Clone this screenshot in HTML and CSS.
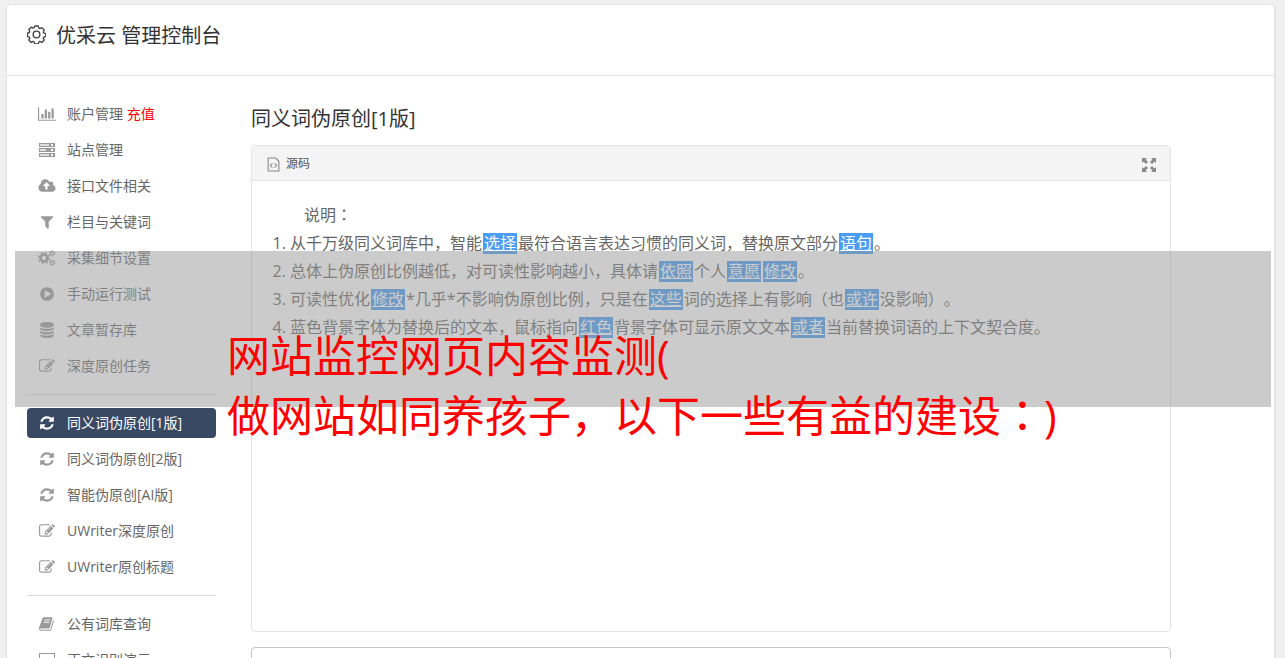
FILE: index.html
```html
<!DOCTYPE html>
<html lang="zh-CN">
<head>
  <meta charset="UTF-8">
  <meta name="viewport" content="width=device-width, initial-scale=1.0">
  <title>优采云 管理控制台</title>
  <link rel="stylesheet" href="styles.css">
</head>
<body>
  <!-- 图标 -->
  <svg class="sprite" aria-hidden="true">
    <symbol id="i-chart" viewBox="0 0 2048 1792"><path d="M640 896v512h-256v-512h256zm384-512v1024h-256v-1024h256zm1024 1152v128h-2048v-1536h128v1408h1920zm-640-896v768h-256v-768h256zm384-384v1152h-256v-1152h256z"/></symbol>
    <symbol id="i-server" viewBox="0 0 16 14"><path fill-rule="evenodd" d="M0 0h16v4H0zM12 1v2h2V1zM0 5h16v4H0zM12 6v2h2V6zM0 10h16v4H0zM12 11v2h2v-2z"/><path fill="#ddd" d="M1 1h9v2H1zM1 6h6v2H1zM1 11h9v2H1z"/></symbol>
    <symbol id="i-cloud" viewBox="-64 0 1920 1792"><path d="M1216 864q0-14-9-23l-352-352q-9-9-23-9t-23 9l-351 351q-10 12-10 24 0 14 9 23t23 9h224v352q0 13 9.5 22.5t22.5 9.5h192q13 0 22.5-9.5t9.5-22.5v-352h224q13 0 22.5-9.5t9.5-22.5zm640 288q0 159-112.5 271.5t-271.5 112.5h-1088q-185 0-316.5-131.5t-131.5-316.5q0-130 70-240t188-165q-2-30-2-43 0-212 150-362t362-150q156 0 285.5 87t188.5 231q71-62 166-62 106 0 181 75t75 181q0 76-41 138 130 31 213.5 135.5t83.5 238.5z"/></symbol>
    <symbol id="i-filter" viewBox="0 0 1792 1792"><path d="M1595 295q17 41-14 70l-493 493v742q0 42-39 59-13 5-25 5-27 0-45-19l-256-256q-19-19-19-45v-486l-493-493q-31-29-14-70 17-39 59-39h1280q42 0 59 39z"/></symbol>
    <symbol id="i-cogs" viewBox="0 0 18 16">
      <g fill="none" stroke="currentColor">
        <circle cx="6" cy="8" r="3.4" stroke-width="2.4"/>
        <circle cx="6" cy="8" r="5.2" stroke-width="1.6" stroke-dasharray="2 2.084"/>
        <circle cx="14.2" cy="3.4" r="1.8" stroke-width="1.2"/>
        <circle cx="14.2" cy="3.4" r="2.8" stroke-width="1" stroke-dasharray="1.2 1.732"/>
        <circle cx="14.2" cy="12.6" r="1.8" stroke-width="1.2"/>
        <circle cx="14.2" cy="12.6" r="2.8" stroke-width="1" stroke-dasharray="1.2 1.732"/>
      </g>
    </symbol>
    <symbol id="i-play" viewBox="0 0 1792 1792"><path d="M896 128q209 0 385.5 103t279.5 279.5 103 385.5-103 385.5-279.5 279.5-385.5 103-385.5-103-279.5-279.5-103-385.5 103-385.5 279.5-279.5 385.5-103zm384 823q32-18 32-55t-32-55l-544-320q-31-19-64-1-32 19-32 56v640q0 37 32 56 16 8 32 8 17 0 32-9z"/></symbol>
    <symbol id="i-database" viewBox="0 0 1792 1792"><path d="M896 768q237 0 443-43t325-127v170q0 69-103 128t-280 93.5-385 34.5-385-34.5-280-93.5-103-128v-170q119 84 325 127t443 43zm0 768q237 0 443-43t325-127v170q0 69-103 128t-280 93.5-385 34.5-385-34.5-280-93.5-103-128v-170q119 84 325 127t443 43zm0-384q237 0 443-43t325-127v170q0 69-103 128t-280 93.5-385 34.5-385-34.5-280-93.5-103-128v-170q119 84 325 127t443 43zm0-1152q208 0 385 34.5t280 93.5 103 128v128q0 69-103 128t-280 93.5-385 34.5-385-34.5-280-93.5-103-128v-128q0-69 103-128t280-93.5 385-34.5z"/></symbol>
    <symbol id="i-edit" viewBox="0 0 1792 1792"><path d="M888 1184l116-116-152-152-116 116v56h96v96h56zm440-720q-16-16-33 1l-350 350q-17 17-1 33t33-1l350-350q17-17 1-33zm80 594v190q0 119-84.5 203.5t-203.5 84.5h-832q-119 0-203.5-84.5t-84.5-203.5v-832q0-119 84.5-203.5t203.5-84.5h832q63 0 117 25 15 7 18 23 3 17-9 29l-49 49q-14 14-32 8-23-6-45-6h-832q-66 0-113 47t-47 113v832q0 66 47 113t113 47h832q66 0 113-47t47-113v-126q0-13 9-22l64-64q15-15 35-7t20 29zm-96-738l288 288-672 672h-288v-288zm444 132l-92 92-288-288 92-92q28-28 68-28t68 28l152 152q28 28 28 68t-28 68z"/></symbol>
    <symbol id="i-refresh" viewBox="0 0 1792 1792"><path d="M1639 1056q0 5-1 7-64 268-268 434.5t-478 166.5q-146 0-282.5-55t-243.5-157l-129 129q-19 19-45 19t-45-19-19-45v-448q0-26 19-45t45-19h448q26 0 45 19t19 45-19 45l-137 137q71 66 161 102t187 36q134 0 250-65t186-179q11-17 53-117 8-23 30-23h192q13 0 22.5 9.5t9.5 22.5zm25-800v448q0 26-19 45t-45 19h-448q-26 0-45-19t-19-45 19-45l138-138q-148-137-349-137-134 0-250 65t-186 179q-11 17-53 117-8 23-30 23h-199q-13 0-22.5-9.5t-9.5-22.5v-7q65-268 270-434.5t480-166.5q146 0 284 55.5t245 156.5l130-129q19-19 45-19t45 19 19 45z"/></symbol>
    <symbol id="i-book" viewBox="0 0 1792 1792"><path d="M1639 478q40 57 18 129l-275 906q-19 64-76.5 107.5t-122.5 43.5h-923q-77 0-148.5-53.5t-99.5-131.5q-24-67-2-127 0-4 3-27t4-37q1-8-3-21.5t-3-19.5q2-11 8-21t16.5-23.5 16.5-23.5q23-38 45-91.5t30-91.5q3-10 .5-30t-.5-28q3-11 17-28t17-23q21-36 42-92t25-90q1-9-2.5-32t.5-28q4-13 22-30.5t22-22.5q19-26 42.5-84.5t27.5-96.5q1-8-3-25.5t-2-26.5q2-8 9-18t18-23 17-21q8-12 16.5-30.5t15-35 16-36 19.5-32 26.5-23.5 36-11.5 47.5 5.5l-1 3q38-9 51-9h761q74 0 114 56t18 130l-274 906q-36 119-71.5 153.5t-128.5 34.5h-869q-27 0-38 15-11 16-1 43 24 70 144 70h923q29 0 56-15.5t35-41.5l300-987q7-22 5-57 38 15 59 43zm-1064 2q-4 13 2 22.5t20 9.5h608q13 0 25.5-9.5t16.5-22.5l21-64q4-13-2-22.5t-20-9.5h-608q-13 0-25.5 9.5t-16.5 22.5zm-83 256q-4 13 2 22.5t20 9.5h608q13 0 25.5-9.5t16.5-22.5l21-64q4-13-2-22.5t-20-9.5h-608q-13 0-25.5 9.5t-16.5 22.5z"/></symbol>
    <symbol id="i-screen" viewBox="0 0 18 14"><path fill-rule="evenodd" d="M1 0h16v11H1zM2 1v9h14V1zM0 12h18v2H0z"/></symbol>
  </svg>

  <div class="container">
    <header>
      <svg class="gear" viewBox="0 0 18 18" aria-hidden="true">
        <path d="M7.400 1h3.200l.7 2 .9.400 1.900-.9 2.200 2.200-.9 1.900.4.9 2 .7v2.600l-2 .7-.4.9.9 1.900-2.200 2.200-1.900-.9-.9.400-.7 2H7.400l-.7-2-.9-.4-1.900.9-2.200-2.200.9-1.900-.4-.9-1.700-.7V7.700l1.700-.6.400-.9-.9-1.900 2.200-2.200 1.900.9.900-.4z"/>
        <circle cx="9" cy="9" r="3.200"/>
      </svg>
      <h1>优采云 管理控制台</h1>
    </header>

    <div class="content">
      <nav>
        <a href="#account"><svg class="wide"><use href="#i-chart"/></svg><span>账户管理 <em>充值</em></span></a>
        <a href="#sites"><svg><use href="#i-server"/></svg>站点管理</a>
        <a href="#files"><svg class="wide"><use href="#i-cloud"/></svg>接口文件相关</a>
        <a href="#keywords"><svg><use href="#i-filter"/></svg>栏目与关键词</a>
        <a href="#settings"><svg class="wide"><use href="#i-cogs"/></svg>采集细节设置</a>
        <a href="#run"><svg><use href="#i-play"/></svg>手动运行测试</a>
        <a href="#articles"><svg><use href="#i-database"/></svg>文章暂存库</a>
        <a href="#tasks"><svg><use href="#i-edit"/></svg>深度原创任务</a>
        <hr>
        <a href="#v1" class="active"><svg><use href="#i-refresh"/></svg>同义词伪原创[1版]</a>
        <a href="#v2"><svg><use href="#i-refresh"/></svg>同义词伪原创[2版]</a>
        <a href="#ai"><svg><use href="#i-refresh"/></svg>智能伪原创[AI版]</a>
        <a href="#uwriter"><svg><use href="#i-edit"/></svg>UWriter深度原创</a>
        <a href="#uwriter-title"><svg><use href="#i-edit"/></svg>UWriter原创标题</a>
        <hr>
        <a href="#words"><svg><use href="#i-book"/></svg>公有词库查询</a>
        <a href="#demo"><svg class="wide"><use href="#i-screen"/></svg>正文识别演示</a>
      </nav>

      <main>
        <h2>同义词伪原创[1版]</h2>
        <section class="editor">
          <div class="toolbar">
            <button type="button">
              <svg class="source" viewBox="0 0 12 14" aria-hidden="true"><path d="M1 1h7l3 3v9H1zM5 6L3 8l2 2M7 6l2 2-2 2"/></svg>
              源码
            </button>
            <button type="button" aria-label="全屏">
              <svg class="expand" viewBox="0 0 14 14" aria-hidden="true"><path d="M0 0h5L3.500 1.500 6 4 4 6 1.500 3.500 0 5zM14 0v5l-1.500-1.500L10 6 8 4l2.500-2.500L9 0zM0 14V9l1.500 1.500L4 8l2 2-2.500 2.500L5 14zM14 14H9l1.500-1.500L8 10l2-2 2.500 2.500L14 9z"/></svg>
            </button>
          </div>
          <div class="text">
            <p>说明<span class="mid" lang="zh-TW">：</span></p>
            <ol>
              <li>从千万级同义词库中，智能<mark>选择</mark>最符合语言表达习惯的同义词，替换原文部分<mark>语句</mark>。</li>
              <li>总体上伪原创比例越低，对可读性影响越小，具体请<mark>依照</mark>个人<mark>意愿</mark><mark>修改</mark>。</li>
              <li>可读性优化<mark>修改</mark>*几乎*不影响伪原创比例，只是在<mark>这些</mark>词的选择上有影响（也<mark>或许</mark>没影响）。</li>
              <li>蓝色背景字体为替换后的文本，鼠标指向<mark>红色</mark>背景字体可显示原文文本<mark>或者</mark>当前替换词语的上下文契合度。</li>
            </ol>
          </div>
        </section>
        <textarea aria-label="原文"></textarea>
      </main>
    </div>
  </div>

  <div class="banner">网站监控网页内容监测(<br>做网站如同养孩子，以下一些有益的建设<span class="mid" lang="zh-TW">：</span>)</div>
</body>
</html>
```

FILE: styles.css
```css
:root {
  --text: #666;
  --icon: #999;
  --border: #e3e3e3;
  --active: #394963;
  --highlight: #499df5;
}

* {
  box-sizing: border-box;
}

body {
  font-family: "Open Sans", "Noto Sans CJK SC", sans-serif;
  font-size: 14px;
  text-spacing-trim: space-all;
  margin: 0;
  padding: 4px 9px 0 6px;
  background: #f0f0f0;
  color: var(--text);
  position: relative;
}

.sprite {
  display: none;
}

/* 居中标点 */
.mid {
  font-family: "Noto Sans CJK TC", sans-serif;
  line-height: 1;
}

.container {
  background: white;
  border: 1px solid var(--border);
  border-right-width: 2px;
  border-radius: 5px;
}

header {
  display: flex;
  align-items: center;
  gap: 10px;
  padding: 16px 20px 24px;
  border-bottom: 1px solid var(--border);
}

h1, h2 {
  margin: 0;
  font-size: 20px;
  font-weight: 400;
  line-height: 30px;
  color: #333;
}

.gear {
  width: 19px;
  height: 19px;
  margin-bottom: 4px;
  fill: none;
  stroke: #444;
  stroke-width: 1.3;
  stroke-linejoin: round;
}

.content {
  display: flex;
  gap: 35px;
  padding: 23px 20px;
}

nav {
  flex: 0 0 189px;
  display: flex;
  flex-direction: column;
  gap: 6px;
}

nav a {
  display: flex;
  align-items: center;
  gap: 12px;
  height: 30px;
  padding: 0 12px 2px;
  border-radius: 4px;
  color: var(--text);
  text-decoration: none;
  white-space: nowrap;
}

nav a.active {
  background: var(--active);
  color: white;
}

nav a.active svg {
  color: white;
}

nav svg {
  width: 16px;
  height: 16px;
  margin-top: 2px;
  color: var(--icon);
  fill: currentColor;
}

nav svg.wide {
  width: 18px;
  margin: 2px -1px 0;
}

nav em {
  font-style: normal;
  color: red;
}

hr {
  width: 100%;
  margin: 7px 0;
  border: 0;
  border-top: 1px solid #ddd;
}

main {
  flex: 1;
  max-width: 920px;
  padding-top: 5px;
}

.editor {
  min-height: 487px;
  margin: 11px 0 15px;
  border: 1px solid var(--border);
  border-radius: 4px;
}

.toolbar {
  display: flex;
  justify-content: space-between;
  height: 35px;
  padding: 0 14px 0 15px;
  background: #f4f4f4;
  border-bottom: 1px solid var(--border);
}

.toolbar button {
  display: flex;
  align-items: center;
  gap: 6px;
  padding: 0;
  border: 0;
  background: none;
  font-family: inherit;
  font-size: 12px;
  color: #555;
}

.toolbar svg {
  margin-top: 3px;
}

.source {
  width: 13px;
  height: 15px;
  fill: none;
  stroke: #888;
}

.expand {
  width: 14px;
  height: 14px;
  fill: #888;
}

.text {
  padding: 20px;
  font-size: 16px;
  line-height: 28px;
}

.text p {
  margin: 0;
  text-indent: 2em;
}

.text ol {
  margin: 0;
  padding-left: 18px;
}

mark {
  margin: 0 1px;
  padding: 0 1px;
  display: inline-block;
  line-height: 21px;
  background: var(--highlight);
  color: white;
  text-decoration: underline;
}

textarea {
  display: block;
  width: 100%;
  height: 120px;
  border: 1px solid #c5c5c5;
  border-radius: 4px;
  resize: none;
}

.banner {
  position: absolute;
  top: 251px;
  left: 15px;
  right: 14px;
  height: 156px;
  padding: 75px 0 0 212px;
  background: rgba(151, 151, 151, 0.5);
  color: red;
  font-size: 43px;
  line-height: 60px;
  white-space: nowrap;
}
```
